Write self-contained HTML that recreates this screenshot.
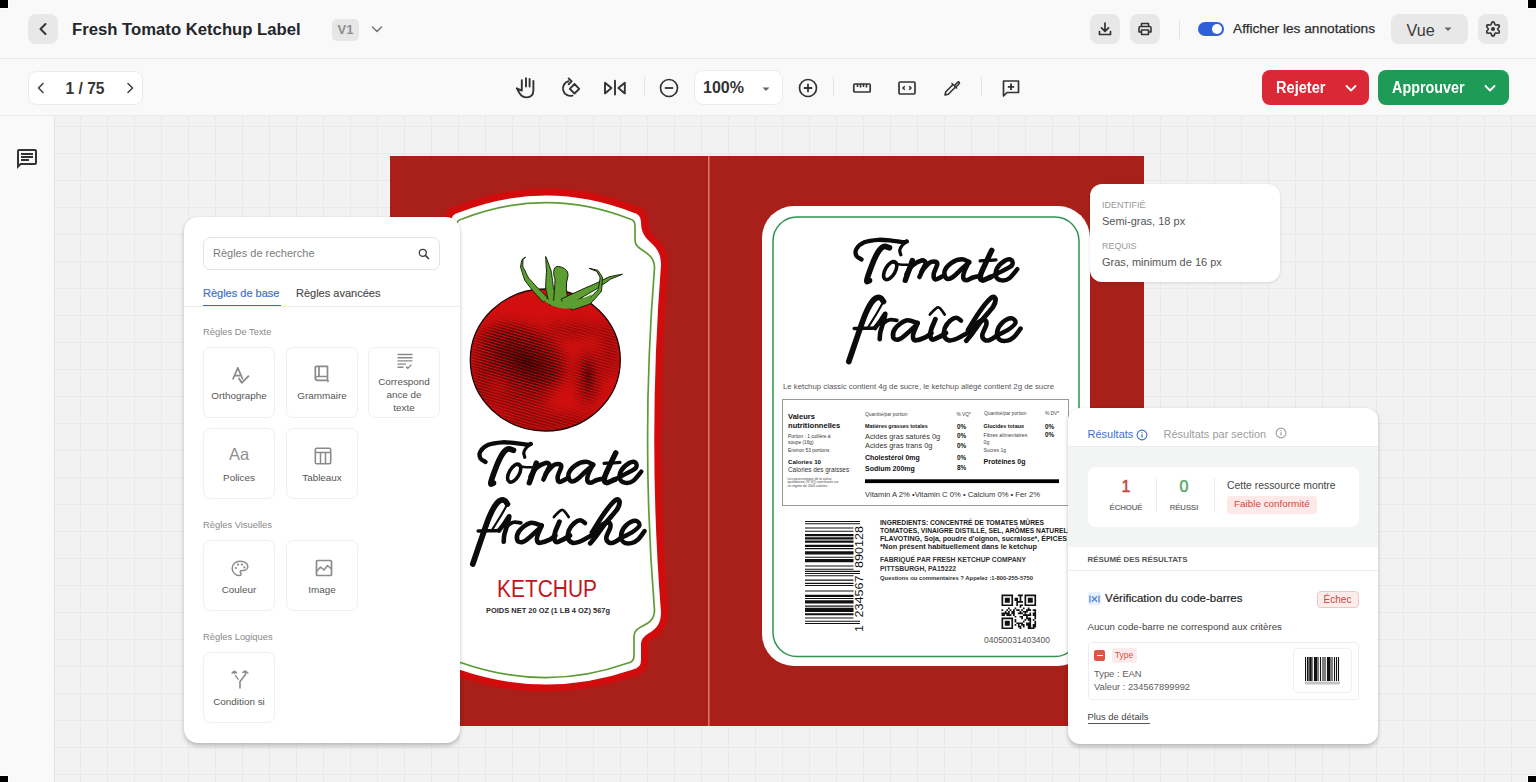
<!DOCTYPE html>
<html><head><meta charset="utf-8">
<style>
*{box-sizing:border-box;margin:0;padding:0}
html,body{width:1536px;height:782px;overflow:hidden;background:#f9f9f9;font-family:"Liberation Sans",sans-serif;color:#2b2b2b}
.abs{position:absolute}
.corner{position:absolute;width:9px;height:9px;background:#000;z-index:50}
#header{position:absolute;left:0;top:0;width:1536px;height:59px;background:#f9f9f9;border-bottom:1px solid #ebebeb}
#toolbar{position:absolute;left:0;top:58px;width:1536px;height:58px;background:transparent;border-bottom:1px solid #ececec}
#sidebar{position:absolute;left:0;top:116px;width:54px;height:666px;background:#f9f9f9}
#canvas{position:absolute;left:54px;top:116px;width:1482px;height:666px;background-color:#f2f2f2;
 background-image:linear-gradient(to right,#e9e9e9 1px,transparent 1px),linear-gradient(to bottom,#e9e9e9 1px,transparent 1px);
 background-size:27px 27px;background-position:-1px 10px}
.ibtn{position:absolute;width:30px;height:30px;border-radius:8px;background:#e8e8e9}
.ibtn svg{position:absolute;left:5px;top:5px}
.sep{position:absolute;width:1px;background:#e3e3e3}
svg{display:block}
#lpanel{position:absolute;left:184px;top:217px;width:276px;height:526px;background:#fff;border-radius:14px;box-shadow:0 2.5px 4px rgba(0,0,0,.22),0 0 1px rgba(0,0,0,.08);z-index:10}
.card{position:absolute;width:72px;height:71px;border:1px solid #f0f0f0;border-radius:7px;background:#fff}
.card .t{position:absolute;left:0;width:100%;text-align:center;font-size:9.9px;color:#555;line-height:13px}
.card svg{position:absolute}

#tip{position:absolute;left:1090px;top:184px;width:190px;height:98px;background:#fff;border-radius:12px;box-shadow:0 1px 3px rgba(0,0,0,.12);z-index:12}
#tip .k{position:absolute;left:12px;font-size:9px;color:#9a9a9a}
#tip .v{position:absolute;left:12px;font-size:11px;color:#555}
#rpanel{position:absolute;left:1068px;top:408px;width:310px;height:336px;background:#fff;border-radius:12px;box-shadow:0 2.5px 4px rgba(0,0,0,.22),0 0 1px rgba(0,0,0,.08);z-index:12;overflow:hidden}
.sect{position:absolute;left:19px;font-size:9.35px;color:#8a8a8a}

</style></head><body>
<div class="corner" style="left:0;top:0;border-right:1px solid #fff;border-bottom:1px solid #fff"></div>
<div class="corner" style="right:0;top:0;border-left:1px solid #fff;border-bottom:1px solid #fff"></div>
<div class="corner" style="left:0;bottom:-2px;border-right:1px solid #fff;border-top:1px solid #fff"></div>
<div class="corner" style="right:0;bottom:-2px;border-left:1px solid #fff;border-top:1px solid #fff"></div>

<div id="header">
  <div class="ibtn" style="left:28px;top:14px">
    <svg width="20" height="20" viewBox="0 0 20 20"><path d="M12.5 5 L7.5 10 L12.5 15" fill="none" stroke="#333" stroke-width="2" stroke-linecap="round" stroke-linejoin="round"/></svg>
  </div>
  <div class="abs" style="left:72px;top:20px;font-size:16.7px;font-weight:bold;color:#23262b;white-space:nowrap">Fresh Tomato Ketchup Label</div>
  <div class="abs" style="left:332px;top:18.5px;width:27px;height:22px;border-radius:5px;background:#e6e6e6;color:#8f8f8f;font-size:13px;font-weight:bold;text-align:center;line-height:22px">V1</div>
  <svg class="abs" style="left:368px;top:20px" width="18" height="18" viewBox="0 0 18 18"><path d="M4.5 7 L9 11.5 L13.5 7" fill="none" stroke="#777" stroke-width="1.6" stroke-linecap="round" stroke-linejoin="round"/></svg>

  <div class="ibtn" style="left:1090px;top:14px">
    <svg width="20" height="20" viewBox="0 0 20 20"><path d="M10 4 V12 M6.5 8.8 L10 12.3 L13.5 8.8 M4.5 12.5 V15.5 H15.5 V12.5" fill="none" stroke="#333" stroke-width="1.7" stroke-linecap="round" stroke-linejoin="round"/></svg>
  </div>
  <div class="ibtn" style="left:1130px;top:14px">
    <svg width="20" height="20" viewBox="0 0 20 20"><path d="M6.5 7.5 V4.5 H13.5 V7.5 M6.5 13 H4 V9 Q4 7.5 5.5 7.5 H14.5 Q16 7.5 16 9 V13 H13.5 M6.5 11 H13.5 V15.5 H6.5 Z" fill="none" stroke="#333" stroke-width="1.6" stroke-linejoin="round"/></svg>
  </div>
  <div class="sep" style="left:1179px;top:20px;height:19px"></div>
  <div class="abs" style="left:1198px;top:22px;width:26px;height:14px;border-radius:7px;background:#2f5fd9">
    <div class="abs" style="left:14px;top:2px;width:10px;height:10px;border-radius:50%;background:#fff"></div>
  </div>
  <div class="abs" style="left:1233px;top:20.5px;font-size:13.7px;color:#2e2e2e;white-space:nowrap;-webkit-text-stroke:0.25px #2e2e2e">Afficher les annotations</div>
  <div class="abs" style="left:1391px;top:14px;width:77px;height:30px;border-radius:8px;background:#e8e8e9">
    <div class="abs" style="left:15.5px;top:6.5px;font-size:16.2px;color:#3a3a3a">Vue</div>
    <svg class="abs" style="left:50px;top:8px" width="14" height="14" viewBox="0 0 14 14"><path d="M3.5 5.5 L7 9 L10.5 5.5Z" fill="#666"/></svg>
  </div>
  <div class="ibtn" style="left:1478px;top:14px">
    <svg width="20" height="20" viewBox="0 0 20 20"><path d="M10.00 2.85 L10.46 2.96 L10.89 3.27 L11.24 3.74 L11.53 4.30 L11.74 4.87 L11.92 5.37 L12.10 5.74 L12.32 5.97 L12.64 6.05 L13.05 6.02 L13.57 5.92 L14.17 5.83 L14.80 5.79 L15.38 5.87 L15.87 6.08 L16.19 6.42 L16.33 6.88 L16.27 7.40 L16.04 7.95 L15.70 8.47 L15.32 8.94 L14.97 9.35 L14.73 9.69 L14.65 10.00 L14.73 10.31 L14.97 10.65 L15.32 11.06 L15.70 11.53 L16.04 12.05 L16.27 12.60 L16.33 13.12 L16.19 13.57 L15.87 13.92 L15.38 14.13 L14.80 14.21 L14.17 14.17 L13.57 14.08 L13.05 13.98 L12.64 13.95 L12.32 14.03 L12.10 14.26 L11.92 14.63 L11.74 15.13 L11.53 15.70 L11.24 16.26 L10.89 16.73 L10.46 17.04 L10.00 17.15 L9.54 17.04 L9.11 16.73 L8.76 16.26 L8.47 15.70 L8.26 15.13 L8.08 14.63 L7.90 14.26 L7.68 14.03 L7.36 13.95 L6.95 13.98 L6.43 14.08 L5.83 14.17 L5.20 14.21 L4.62 14.13 L4.13 13.92 L3.81 13.58 L3.67 13.12 L3.73 12.60 L3.96 12.05 L4.30 11.53 L4.68 11.06 L5.03 10.65 L5.27 10.31 L5.35 10.00 L5.27 9.69 L5.03 9.35 L4.68 8.94 L4.30 8.47 L3.96 7.95 L3.73 7.40 L3.67 6.88 L3.81 6.42 L4.13 6.08 L4.62 5.87 L5.20 5.79 L5.83 5.83 L6.43 5.92 L6.95 6.02 L7.36 6.05 L7.67 5.97 L7.90 5.74 L8.08 5.37 L8.26 4.87 L8.47 4.30 L8.76 3.74 L9.11 3.27 L9.54 2.96Z" fill="none" stroke="#333" stroke-width="1.6" stroke-linejoin="round"/><circle cx="10" cy="10" r="2" fill="#333"/></svg>
  </div>
</div>

<div id="toolbar">
  <div class="abs" style="left:28px;top:13px;width:115px;height:34px;border-radius:8px;background:#fff;border:1px solid #ebebeb">
    <svg class="abs" style="left:3px;top:7px" width="18" height="18" viewBox="0 0 18 18"><path d="M11 4.5 L6.5 9 L11 13.5" fill="none" stroke="#444" stroke-width="1.6" stroke-linecap="round" stroke-linejoin="round"/></svg>
    <div class="abs" style="left:36.5px;top:8px;font-size:15.6px;font-weight:bold;color:#363636;white-space:nowrap">1 / 75</div>
    <svg class="abs" style="left:92px;top:7px" width="18" height="18" viewBox="0 0 18 18"><path d="M7 4.5 L11.5 9 L7 13.5" fill="none" stroke="#444" stroke-width="1.6" stroke-linecap="round" stroke-linejoin="round"/></svg>
  </div>

  <!-- tools -->
  <svg class="abs" style="left:510px;top:16px" width="120" height="28" viewBox="510 74 120 28"><g fill="none" stroke="#333" stroke-width="1.9" stroke-linecap="round" stroke-linejoin="round">
   <path d="M521.8 90 V80.2 M526 86.5 V78.2 M529.6 86.5 V79 M533.4 90.5 V81 M533.4 90 C533.4 95 530.5 97.4 526.5 97.4 C523 97.4 521 95.5 519.6 93.2 L516.8 88.3 L521.8 90.6"/>
   <path d="M572.5 95.6 A7.3 7.3 0 1 1 568.4 81.2 M568.6 78.4 L571.6 81.3 L568.6 84.2"/>
   <path d="M574.5 84 L579.2 88.8 L574.5 93.5 L569.8 88.8 Z"/>
   <path d="M605 82.8 V93.4 L611.4 88.1 Z M624.8 82.8 V93.4 L618.4 88.1 Z M615 80.8 V94.6"/>
  </g></svg>
  <div class="sep" style="left:644px;top:19px;height:19px"></div>
  <svg class="abs" style="left:659px;top:20px" width="20" height="20" viewBox="0 0 20 20"><circle cx="10" cy="10" r="8.5" fill="none" stroke="#333" stroke-width="1.7"/><path d="M5.8 10 H14.2" stroke="#333" stroke-width="1.8"/></svg>
  <div class="abs" style="left:694px;top:12px;width:89px;height:35px;border-radius:9px;background:#fff;border:1px solid #ececec">
    <div class="abs" style="left:8px;top:8px;font-size:16px;font-weight:bold;color:#333">100%</div>
    <svg class="abs" style="left:64px;top:11px" width="14" height="14" viewBox="0 0 14 14"><path d="M3.5 5.5 L7 9 L10.5 5.5Z" fill="#666"/></svg>
  </div>
  <svg class="abs" style="left:798px;top:20px" width="20" height="20" viewBox="0 0 20 20"><circle cx="10" cy="10" r="8.5" fill="none" stroke="#333" stroke-width="1.7"/><path d="M5.8 10 H14.2 M10 5.8 V14.2" stroke="#333" stroke-width="1.8"/></svg>
  <div class="sep" style="left:833px;top:19px;height:19px"></div>
  <svg class="abs" style="left:852px;top:20px" width="20" height="20" viewBox="0 0 20 20"><rect x="1.8" y="6" width="16.4" height="8" rx="1" fill="none" stroke="#333" stroke-width="1.7"/><path d="M5.5 6 V9 M8.5 6 V9.5 M11.5 6 V9 M14.5 6 V9.5" stroke="#333" stroke-width="1.6"/></svg>
  <svg class="abs" style="left:897px;top:20px" width="20" height="20" viewBox="0 0 20 20"><rect x="2" y="4" width="16" height="12" rx="1.2" fill="none" stroke="#333" stroke-width="1.7"/><path d="M7.8 8.2 L6 10 L7.8 11.8 M12.2 8.2 L14 10 L12.2 11.8" fill="none" stroke="#333" stroke-width="1.5"/></svg>
  <svg class="abs" style="left:942px;top:20px" width="20" height="20" viewBox="0 0 20 20"><path d="M11 6.5 L3.8 13.7 L3 17 L6.3 16.2 L13.5 9 M10 5.5 L14.5 10 M12.2 7.8 L15.2 4.8 Q16.5 3.5 17.2 4.2 Q18 5 16.7 6.3 L13.7 9.3" fill="none" stroke="#333" stroke-width="1.6" stroke-linecap="round" stroke-linejoin="round"/></svg>
  <div class="sep" style="left:981px;top:19px;height:19px"></div>
  <svg class="abs" style="left:1001px;top:20px" width="20" height="20" viewBox="0 0 20 20"><path d="M2.5 3 H17.5 V14.5 H6 L2.5 18 Z" fill="none" stroke="#333" stroke-width="1.7" stroke-linejoin="round"/><path d="M10 5.5 V12 M6.8 8.8 H13.2" stroke="#333" stroke-width="1.8"/></svg>
  <!-- action buttons -->
  <div class="abs" style="left:1262px;top:12px;width:107px;height:35px;border-radius:8px;background:#da2836">
    <div class="abs" style="left:14px;top:8.8px;font-size:15.8px;font-weight:bold;color:#fff;transform:scaleX(.925);transform-origin:0 0">Rejeter</div>
    <svg class="abs" style="left:81px;top:10px" width="16" height="16" viewBox="0 0 16 16"><path d="M3.5 6 L8 10.5 L12.5 6" fill="none" stroke="#fff" stroke-width="1.8" stroke-linecap="round" stroke-linejoin="round"/></svg>
  </div>
  <div class="abs" style="left:1378px;top:12px;width:131px;height:35px;border-radius:8px;background:#1f9b58">
    <div class="abs" style="left:14px;top:8.8px;font-size:15.8px;font-weight:bold;color:#fff;transform:scaleX(.91);transform-origin:0 0">Approuver</div>
    <svg class="abs" style="left:104px;top:10px" width="16" height="16" viewBox="0 0 16 16"><path d="M3.5 6 L8 10.5 L12.5 6" fill="none" stroke="#fff" stroke-width="1.8" stroke-linecap="round" stroke-linejoin="round"/></svg>
  </div>
</div>

<div id="sidebar">
  <svg class="abs" style="left:15px;top:31px" width="24" height="24" viewBox="0 0 24 24"><path fill="#333" d="M4 4h16v12H5.17L4 17.17V4m0-2c-1.1 0-1.99.9-1.99 2L2 22l4-4h14c1.1 0 2-.9 2-2V4c0-1.1-.9-2-2-2H4zm2 10h8v2H6v-2zm0-3h12v2H6V9zm0-3h12v2H6V6z" transform="translate(0,0)"/></svg>
</div>
<div id="canvas"></div>
<div class="abs" style="left:54px;top:116px;width:1px;height:666px;background:#e4e4e4"></div>






<div id="tip">
  <div class="k" style="top:16px">IDENTIFIÉ</div>
  <div class="v" style="top:31px">Semi-gras, 18 px</div>
  <div class="k" style="top:57px">REQUIS</div>
  <div class="v" style="top:72px">Gras, minimum de 16 px</div>
</div>
<div id="rpanel">
  <div class="abs" style="left:19.5px;top:20px;font-size:11px;color:#3c6fd0;white-space:nowrap">Résultats</div>
  <svg class="abs" style="left:68px;top:20.5px" width="12" height="12" viewBox="0 0 12 12"><circle cx="6" cy="6" r="4.9" fill="none" stroke="#3c6fd0" stroke-width="1.1"/><path d="M6 5.2 V8.6" stroke="#3c6fd0" stroke-width="1.2"/><circle cx="6" cy="3.6" r="0.7" fill="#3c6fd0"/></svg>
  <div class="abs" style="left:95.5px;top:20px;font-size:11px;color:#9d9d9d;white-space:nowrap">Résultats par section</div>
  <svg class="abs" style="left:206.5px;top:19px" width="12" height="12" viewBox="0 0 12 12"><circle cx="6" cy="6" r="4.9" fill="none" stroke="#9d9d9d" stroke-width="1.1"/><path d="M6 5.2 V8.6" stroke="#9d9d9d" stroke-width="1.2"/><circle cx="6" cy="3.6" r="0.7" fill="#9d9d9d"/></svg>
  <div class="abs" style="left:0;top:38px;width:310px;height:101px;background:#f3f4f4;border-top:1px solid #ececec"></div>
  <div class="abs" style="left:19.5px;top:58.5px;width:271px;height:60px;background:#fff;border-radius:8px"></div>
  <div class="abs" style="left:38px;top:69.5px;width:40px;text-align:center;font-size:16px;color:#c4463c;-webkit-text-stroke:0.5px #c4463c">1</div>
  <div class="abs" style="left:33px;top:94.5px;width:50px;text-align:center;font-size:7.7px;color:#666;-webkit-text-stroke:0.2px #666">ÉCHOUÉ</div>
  <div class="abs" style="left:88px;top:70px;width:1px;height:34px;background:#ececec"></div>
  <div class="abs" style="left:96px;top:69.5px;width:40px;text-align:center;font-size:16px;color:#55a76c;-webkit-text-stroke:0.5px #55a76c">0</div>
  <div class="abs" style="left:91px;top:94.5px;width:50px;text-align:center;font-size:7.7px;color:#666;-webkit-text-stroke:0.2px #666">RÉUSSI</div>
  <div class="abs" style="left:146px;top:70px;width:1px;height:34px;background:#ececec"></div>
  <div class="abs" style="left:159px;top:71.5px;font-size:10.4px;color:#444;white-space:nowrap">Cette ressource montre</div>
  <div class="abs" style="left:159px;top:87.5px;width:90px;height:18px;background:#fde9e9;border-radius:3px"></div>
  <div class="abs" style="left:166px;top:90px;font-size:9.9px;color:#d8453b;white-space:nowrap">Faible conformité</div>
  <div class="abs" style="left:19.5px;top:146.5px;font-size:7.9px;font-weight:bold;color:#555;white-space:nowrap">RÉSUMÉ DES RÉSULTATS</div>
  <div class="abs" style="left:0;top:162px;width:310px;height:1px;background:#ececec"></div>
  <div class="abs" style="left:19.5px;top:184px;width:13px;height:13px;border-radius:2px;background:#e6effd"></div>
  <svg class="abs" style="left:20.5px;top:185.5px" width="11" height="10" viewBox="0 0 11 10"><path d="M1 1.5 V8.5 M10 1.5 V8.5" stroke="#4a7bd8" stroke-width="1.2"/><path d="M3 2.5 L5.5 5 L8 2.5 M3 7.5 L5.5 5 L8 7.5" fill="none" stroke="#4a7bd8" stroke-width="1.2"/></svg>
  <div class="abs" style="left:37px;top:184px;font-size:11.5px;color:#252525;white-space:nowrap;-webkit-text-stroke:0.2px #252525">Vérification du code-barres</div>
  <div class="abs" style="left:248.5px;top:183px;width:42px;height:17px;background:#fdecec;border:1px solid #f3c4c4;border-radius:4px;text-align:center;font-size:10px;line-height:15px;color:#c9463c">Échec</div>
  <div class="abs" style="left:19.5px;top:213px;font-size:9.7px;color:#444;white-space:nowrap">Aucun code-barre ne correspond aux critères</div>
  <div class="abs" style="left:19.5px;top:233.5px;width:271px;height:58.5px;border:1px solid #ededed;border-radius:4px"></div>
  <div class="abs" style="left:26px;top:242px;width:11px;height:11px;border-radius:2px;background:#e05448"></div>
  <div class="abs" style="left:28.5px;top:246.8px;width:6px;height:1.6px;background:#fff"></div>
  <div class="abs" style="left:43.5px;top:240px;width:25px;height:15px;border-radius:3px;background:#fdeaea;font-size:8.5px;line-height:15px;text-align:center;color:#d0544a">Type</div>
  <div class="abs" style="left:26px;top:259.5px;font-size:9.4px;color:#606060;white-space:nowrap">Type : EAN</div>
  <div class="abs" style="left:26px;top:273.5px;font-size:9.3px;color:#606060;white-space:nowrap">Valeur : 234567899992</div>
  <div class="abs" style="left:225px;top:240px;width:59px;height:45px;border:1px solid #f0f0f0;border-radius:4px;background:#fff"></div>
  <svg class="abs" style="left:237px;top:249px" width="35" height="28" viewBox="0 0 35 28"><path d="M0.5 0 V24 M2.5 0 V24 M4 0 V24 M7 0 V24 M9.5 0 V24 M13 0 V24 M15.5 0 V24 M18 0 V24 M20 0 V24 M22.5 0 V24 M25 0 V24 M27 0 V24 M29.5 0 V24 M31.5 0 V24 M33.5 0 V24" stroke="#111" stroke-width="1.1"/><path d="M5.5 0 V24 M11 0 V24 M24 0 V24" stroke="#111" stroke-width="2"/><rect x="0" y="24.5" width="35" height="3" fill="#888" opacity="0.5"/></svg>
  <div class="abs" style="left:19.5px;top:303px;font-size:9.4px;color:#444;white-space:nowrap">Plus de détails</div>
  <div class="abs" style="left:19.5px;top:315px;width:62px;height:1px;background:#555"></div>
</div>













<svg id="label" class="abs" style="left:390px;top:156px;z-index:1" width="754" height="570" viewBox="390 156 754 570">
<defs>
  <pattern id="hatch" width="6" height="2.8" patternUnits="userSpaceOnUse" patternTransform="rotate(16)">
    <rect width="6" height="1.4" fill="#220202"/>
  </pattern>
  <radialGradient id="mk" cx="0.5" cy="0.5" r="0.5">
    <stop offset="0" stop-color="#fff" stop-opacity="1"/>
    <stop offset="1" stop-color="#fff" stop-opacity="0"/>
  </radialGradient>
  <filter id="blur6" x="-50%" y="-50%" width="200%" height="200%"><feGaussianBlur stdDeviation="7"/></filter>
  <mask id="shmask" maskUnits="userSpaceOnUse" x="460" y="280" width="170" height="160">
    <g filter="url(#blur6)">
    <ellipse cx="522" cy="358" rx="46" ry="30" fill="#fff" transform="rotate(25 522 358)"/>
    <ellipse cx="588" cy="378" rx="9" ry="26" fill="#fff"/>
    <ellipse cx="575" cy="330" rx="30" ry="5" fill="#ccc"/>
    <ellipse cx="482" cy="372" rx="9" ry="40" fill="#bbb"/>
    <ellipse cx="545" cy="422" rx="50" ry="8" fill="#aaa"/>
    <ellipse cx="610" cy="350" rx="7" ry="28" fill="#aaa"/>
    <ellipse cx="520" cy="400" rx="30" ry="12" fill="#999"/>
    </g>
  </mask>
  <radialGradient id="dark1" cx="0.5" cy="0.5" r="0.5">
    <stop offset="0" stop-color="#2a0202" stop-opacity="0.85"/>
    <stop offset="0.6" stop-color="#4a0404" stop-opacity="0.45"/>
    <stop offset="1" stop-color="#4a0404" stop-opacity="0"/>
  </radialGradient>
  <clipPath id="tclip"><ellipse cx="545.3" cy="360" rx="75" ry="71"/></clipPath>
</defs>
<rect x="390" y="156" width="754" height="570" fill="#a91f19"/>
<rect x="708" y="156" width="1.6" height="570" fill="#d8726c"/>
<!-- left bottle label -->
<path d="M451 222 Q451 214 459 212.5 Q546 178.5 633 212.5 Q641 214 641 222 C641 245 661 240 661 265 C652 380 652 500 661 612 C661 636 641 630 641 645 L641 660 Q641 668 633 669.5 Q546 699.5 459 669.5 Q451 668 451 660 L451 645 C451 630 431 636 431 612 C440 500 440 380 431 265 C431 240 451 245 451 222 Z" fill="#d20c0c" stroke="#d20c0c" stroke-width="14" stroke-linejoin="round"/>
<path d="M451 222 Q451 214 459 212.5 Q546 178.5 633 212.5 Q641 214 641 222 C641 245 661 240 661 265 C652 380 652 500 661 612 C661 636 641 630 641 645 L641 660 Q641 668 633 669.5 Q546 699.5 459 669.5 Q451 668 451 660 L451 645 C451 630 431 636 431 612 C440 500 440 380 431 265 C431 240 451 245 451 222 Z" fill="#fff"/>
<path d="M456.5 226 Q456.5 220 462 219 Q546 186.2 630 219 Q635 220 635 226 L635 240 C635 252 654.5 250 654.5 268 C645.5 380 645.5 500 654.5 610 C654.5 628 634 624 634 636 L634 656 Q634 662 628 663 Q546 692.2 462 663 Q456.5 662 456.5 656 L456.5 636 C456.5 624 437.5 628 437.5 610 C446.5 500 446.5 380 437.5 268 C437.5 250 456.5 252 456.5 240 Z" fill="none" stroke="#5d9c35" stroke-width="1.7"/>
<!-- tomato -->
<g>
  <ellipse cx="545.3" cy="360" rx="75" ry="71" fill="#d10f0f"/>
  <g clip-path="url(#tclip)">
    <g mask="url(#shmask)"><rect x="465" y="285" width="160" height="150" fill="url(#hatch)"/></g>
    <ellipse cx="526" cy="362" rx="38" ry="20" fill="url(#dark1)" transform="rotate(28 526 362)" opacity="0.8"/>
    <ellipse cx="588" cy="376" rx="8" ry="18" fill="url(#dark1)" opacity="0.5"/>
  </g>
  <ellipse cx="545.3" cy="360" rx="75" ry="71" fill="none" stroke="#1e0404" stroke-width="1.3"/>
  <g fill="#5c9e31" stroke="#142008" stroke-width="1" stroke-linejoin="round"><path d="M547.7 297.9 L546.5 296.6 L545.2 295.4 L544.0 294.1 L542.8 292.9 L541.5 291.6 L540.3 290.4 L539.0 289.2 L537.8 288.0 L536.6 286.8 L535.5 285.5 L534.3 284.2 L533.1 282.9 L531.9 281.6 L530.7 280.3 L529.5 279.1 L528.5 278.0 L527.9 276.8 L527.1 275.2 L526.3 273.6 L525.6 272.0 L524.8 270.4 L524.0 268.9 L523.2 267.4 L522.8 266.0 L522.8 264.5 L522.9 262.7 L522.9 261.0 L523.1 259.5 L524.3 258.3 L525.5 257.0 L525.5 257.0 L524.0 258.0 L522.5 259.0 L521.7 260.7 L521.3 262.5 L521.0 264.2 L520.6 266.1 L520.9 268.1 L521.4 269.9 L521.9 271.6 L522.5 273.3 L523.0 274.9 L523.5 276.6 L524.1 278.3 L524.8 280.3 L526.1 282.0 L527.1 283.4 L528.2 284.8 L529.2 286.2 L530.3 287.6 L531.4 288.9 L532.5 290.4 L533.7 291.8 L534.9 293.1 L536.1 294.4 L537.3 295.7 L538.5 297.0 L539.7 298.3 L540.9 299.6 L542.1 300.8 L543.3 302.1Z"/><path d="M558.2 302.8 L557.8 301.2 L557.4 299.7 L556.9 298.1 L556.4 296.6 L556.0 295.1 L555.5 293.5 L555.0 292.0 L554.4 290.5 L553.9 288.9 L553.5 287.7 L553.3 286.6 L553.1 285.1 L552.9 283.5 L552.7 281.9 L552.5 280.3 L552.3 278.7 L552.0 277.0 L551.8 275.4 L551.6 273.8 L551.3 272.2 L551.0 270.4 L550.4 268.7 L549.8 267.2 L549.3 265.6 L548.7 264.1 L548.1 262.6 L547.6 261.1 L547.0 259.5 L546.4 258.0 L545.7 256.5 L545.7 256.5 L545.7 258.1 L545.8 259.8 L545.9 261.4 L546.0 263.1 L546.1 264.7 L546.2 266.3 L546.3 267.9 L546.4 269.6 L546.5 271.0 L546.4 272.5 L546.3 274.0 L546.2 275.7 L546.1 277.3 L546.0 278.9 L545.9 280.5 L545.8 282.2 L545.7 283.8 L545.7 285.4 L545.7 287.1 L545.8 289.2 L546.2 291.1 L546.6 292.7 L546.9 294.2 L547.3 295.8 L547.7 297.4 L548.1 299.0 L548.5 300.5 L548.9 302.1 L549.3 303.6 L549.8 305.2Z"/><path d="M553.5 303 C554 294 555 286 555 279 C553 275 553 267 557 266.5 C561 266 566 269 567.5 272 C569 275 567 279 566.5 283 C566 290 567 297 569 303 Z"/><path d="M564.9 306.8 L566.9 305.8 L568.8 304.7 L570.8 303.7 L572.7 302.6 L574.7 301.5 L576.6 300.5 L578.5 299.4 L580.5 298.3 L582.4 297.2 L584.3 296.1 L586.2 295.0 L588.1 293.9 L590.0 292.7 L592.0 291.6 L593.9 290.5 L595.8 289.4 L597.7 288.2 L599.6 286.9 L601.5 285.6 L603.3 284.3 L605.1 283.1 L606.9 281.8 L608.7 280.5 L610.3 279.2 L612.2 278.5 L614.3 277.6 L616.4 276.8 L618.4 275.9 L620.5 275.1 L622.5 274.2 L622.5 274.2 L620.3 274.6 L618.1 275.0 L615.9 275.4 L613.8 275.8 L611.6 276.3 L609.2 276.8 L607.1 277.8 L605.1 278.8 L603.1 279.8 L601.1 280.8 L599.1 281.8 L597.2 282.7 L595.3 283.6 L593.3 284.5 L591.2 285.4 L589.2 286.3 L587.2 287.1 L585.2 288.0 L583.1 288.9 L581.1 289.9 L579.1 290.8 L577.1 291.7 L575.1 292.6 L573.1 293.5 L571.1 294.4 L569.0 295.4 L567.0 296.3 L565.0 297.3 L563.1 298.2 L561.1 299.2Z"/><path d="M571.7 310.1 L573.8 309.5 L575.8 308.8 L577.8 308.2 L579.9 307.5 L581.9 306.8 L583.9 306.1 L586.0 305.4 L588.1 304.7 L590.5 303.6 L592.3 301.7 L593.7 300.1 L595.2 298.5 L596.6 296.9 L598.0 295.3 L599.4 293.6 L601.1 291.7 L601.7 289.1 L601.9 286.8 L602.0 284.7 L602.2 282.6 L602.3 280.4 L602.5 278.0 L601.6 275.7 L600.3 273.9 L599.1 272.1 L597.6 270.2 L595.3 269.7 L593.2 269.2 L591.1 268.7 L589.0 268.3 L589.0 268.3 L591.0 269.1 L593.0 269.9 L595.0 270.7 L596.8 271.3 L597.7 273.0 L598.7 274.9 L599.7 276.7 L600.1 278.2 L599.8 280.1 L599.4 282.2 L599.0 284.3 L598.7 286.5 L598.3 288.5 L597.9 289.9 L596.7 291.1 L595.2 292.6 L593.6 294.1 L592.1 295.6 L590.6 297.2 L589.1 298.7 L588.0 299.9 L586.5 300.5 L584.5 301.1 L582.5 301.8 L580.5 302.4 L578.4 303.1 L576.4 303.8 L574.3 304.4 L572.3 305.1 L570.3 305.9Z"/><path d="M541 297 C548 300 556 302 565 301.5 C575 301 585 298 592 294 C590 301 582 307 570 308.5 C558 309.5 547 305 541 297 Z" stroke="none"/></g>
</g>
<!-- left script -->
<g transform="translate(-376 202.5)"><g fill="none" stroke="#0b0b0b" stroke-linecap="round" stroke-linejoin="round"><path d="M861.5 259.4C860.7 258.8 857.4 257.7 856.5 256.0C855.6 254.3 855.1 251.3 856.4 249.0C857.7 246.7 860.6 243.8 864.3 242.3C868.0 240.8 873.8 240.1 878.6 239.8C883.4 239.6 888.6 240.4 892.9 240.8C897.2 241.2 902.1 242.1 904.4 242.2C906.7 242.3 906.4 241.5 906.8 241.4" stroke-width="4.32"/><path d="M906.8 241.4C906.1 242.0 903.7 243.6 902.5 245.0C901.3 246.4 900.1 248.4 899.8 250.0C899.5 251.6 900.6 254.0 900.8 254.8" stroke-width="3.24"/><path d="M889.5 247.8C888.5 247.6 885.5 245.8 883.5 246.6C881.5 247.4 879.8 249.2 877.8 252.5C875.8 255.8 873.3 261.5 871.5 266.2C869.7 270.9 867.1 278.1 866.8 280.5C866.5 282.9 869.0 280.5 869.5 280.5" stroke-width="5.67"/><path d="M893.5 262.5C894.6 262.8 897.7 264.1 900.0 264.5C902.3 264.9 906.2 264.8 907.5 264.8" stroke-width="2.43"/><path d="M912.3 260.5C911.8 262.1 910.2 266.7 909.0 270.0C907.8 273.3 905.9 278.6 905.3 280.3" stroke-width="5.40"/><path d="M906.5 274.0C907.5 272.6 909.8 267.8 912.3 265.5C914.8 263.2 919.4 261.0 921.6 260.5C923.8 260.0 925.3 261.4 925.6 262.6C925.9 263.9 924.5 265.6 923.5 268.0C922.5 270.4 920.1 275.5 919.4 277.0" stroke-width="4.59"/><path d="M921.6 271.2C922.8 269.9 926.6 264.9 928.7 263.3C930.9 261.7 933.1 261.5 934.5 261.6C935.9 261.7 937.4 262.0 937.3 264.1C937.2 266.2 934.0 271.5 933.7 274.1C933.4 276.7 934.0 279.2 935.5 279.5C937.0 279.8 941.8 276.6 943.0 276.0" stroke-width="4.59"/><path d="M969.4 262.4C968.2 261.9 965.2 259.2 962.2 259.3C959.2 259.4 954.4 260.8 951.5 262.8C948.6 264.8 945.4 268.6 944.6 271.2C943.8 273.8 945.1 277.4 946.5 278.4C947.9 279.4 950.3 278.7 952.9 277.0C955.5 275.3 959.6 270.8 962.2 268.4C964.8 266.0 967.6 263.6 968.7 262.6" stroke-width="4.59"/><path d="M968.9 261.8C968.2 263.3 965.5 268.4 964.5 271.0C963.5 273.6 962.9 276.0 963.2 277.5C963.5 279.0 964.9 280.2 966.5 280.2C968.1 280.2 970.6 278.2 973.0 277.5C975.4 276.8 979.7 276.2 981.0 276.0" stroke-width="4.59"/><path d="M991.8 250.3C990.9 252.1 988.5 257.0 986.6 261.2C984.7 265.4 981.1 272.3 980.4 275.5C979.7 278.7 980.8 279.9 982.5 280.2C984.2 280.4 989.4 277.5 990.8 277.0" stroke-width="5.40"/><path d="M980.1 260.8C981.4 260.7 985.4 260.5 988.0 260.3C990.6 260.1 994.7 260.0 996.0 259.9" stroke-width="3.24"/><path d="M990.8 277.0C992.6 276.1 998.1 273.3 1001.6 271.4C1005.1 269.5 1010.2 267.4 1011.8 265.5C1013.4 263.6 1012.5 260.8 1011.4 260.0C1010.3 259.2 1007.6 259.1 1005.2 260.5C1002.8 261.9 998.5 265.6 997.0 268.4C995.5 271.1 995.4 275.0 996.2 277.0C997.0 279.0 999.7 280.1 1001.8 280.4C1003.9 280.6 1006.4 280.4 1009.0 278.5C1011.6 276.6 1015.9 270.7 1017.3 269.1" stroke-width="4.46"/><path d="M883.5 301.5C882.9 300.8 881.4 297.7 879.7 297.5C878.0 297.3 875.5 297.8 873.1 300.5C870.7 303.2 868.0 308.1 865.5 313.8C863.0 319.5 860.8 326.7 858.0 334.6C855.2 342.6 850.3 357.0 848.8 361.5" stroke-width="5.67"/><path d="M883.5 301.5C882.4 303.4 879.6 308.7 877.0 313.0C874.4 317.3 869.5 325.1 868.0 327.5" stroke-width="2.16"/><path d="M854.2 328.6C855.8 328.6 860.5 328.4 864.0 328.3C867.5 328.2 873.2 328.1 875.0 328.0" stroke-width="3.51"/><path d="M875.0 328.0C876.0 326.7 879.3 322.4 881.0 320.0C882.7 317.6 885.1 313.1 885.4 313.8C885.7 314.6 883.5 321.4 882.6 324.5C881.8 327.6 880.8 330.0 880.3 332.5C879.8 335.0 879.8 338.2 879.7 339.3" stroke-width="4.59"/><path d="M881.6 325.1C882.4 324.4 884.9 321.9 886.5 321.0C888.1 320.1 889.4 319.7 891.1 319.6C892.8 319.5 895.8 320.3 896.8 320.4" stroke-width="3.78"/><path d="M917.6 323.2C915.7 322.7 909.9 319.5 906.2 320.4C902.5 321.3 897.4 325.6 895.2 328.5C893.0 331.4 892.7 335.6 893.2 337.5C893.8 339.4 896.4 340.1 898.5 339.6C900.6 339.1 903.1 336.8 906.0 334.5C908.9 332.2 914.1 327.1 915.7 325.6" stroke-width="4.59"/><path d="M917.8 322.8C917.1 324.5 914.3 330.4 913.5 333.0C912.7 335.6 912.7 337.3 913.2 338.5C913.7 339.7 914.5 340.5 916.5 340.3C918.5 340.1 922.7 338.6 925.2 337.4C927.7 336.2 930.5 333.7 931.5 333.0" stroke-width="4.59"/><path d="M935.4 319.2C934.8 320.8 932.4 325.8 931.5 328.5C930.6 331.2 930.0 333.6 930.3 335.5C930.5 337.4 931.4 339.4 933.0 339.6C934.6 339.8 937.9 337.6 940.1 336.5C942.3 335.4 945.0 333.6 946.0 333.0" stroke-width="4.86"/><path d="M929.9 314.5C931.3 313.3 935.7 307.3 938.2 307.3C940.7 307.3 943.6 313.3 944.7 314.5" stroke-width="2.70"/><path d="M961.0 320.6C960.2 320.1 958.3 317.8 956.5 317.8C954.7 317.8 952.4 318.8 950.4 320.5C948.4 322.2 945.8 325.4 944.8 328.0C943.8 330.6 943.6 334.0 944.2 336.0C944.8 338.0 946.7 339.6 948.5 340.2C950.3 340.8 952.6 340.2 955.0 339.4C957.4 338.6 960.3 336.8 962.8 335.5C965.3 334.2 968.8 332.2 970.0 331.5" stroke-width="4.59"/><path d="M968.0 330.0C969.7 327.3 974.8 318.7 978.0 314.0C981.2 309.3 984.5 304.8 987.0 302.0C989.5 299.2 991.4 297.4 992.8 297.0C994.2 296.6 995.6 297.8 995.6 299.5C995.6 301.2 995.3 303.6 993.0 307.0C990.7 310.4 985.4 315.7 982.0 320.0C978.6 324.3 975.1 329.5 972.5 333.0C969.9 336.5 967.3 339.5 966.3 340.8" stroke-width="4.86"/><path d="M970.4 331.7C971.7 330.1 975.6 324.3 978.0 322.4C980.4 320.5 983.4 319.9 984.8 320.3C986.2 320.7 986.8 322.1 986.4 324.5C986.0 326.9 982.6 332.4 982.3 335.0C982.0 337.6 983.5 339.2 984.8 340.0C986.1 340.8 988.0 340.6 990.0 339.8C992.0 339.1 995.8 336.2 996.9 335.5" stroke-width="4.59"/><path d="M996.9 335.5C998.8 334.5 1005.4 331.6 1008.5 329.5C1011.6 327.4 1015.0 324.7 1015.5 322.8C1016.0 320.9 1013.7 318.4 1011.5 318.3C1009.3 318.2 1004.9 320.3 1002.5 322.5C1000.1 324.7 997.7 328.6 997.2 331.5C996.7 334.4 997.8 338.1 999.5 339.6C1001.2 341.1 1005.1 341.0 1007.5 340.6C1009.9 340.2 1011.8 339.0 1014.0 337.0C1016.2 335.0 1019.5 329.9 1020.6 328.5" stroke-width="4.46"/><ellipse cx="890.2" cy="270.6" rx="10" ry="5" transform="rotate(-60 890.2 270.6)" stroke-width="3.6"/></g></g>
<text x="497" y="597.3" font-family="Liberation Sans" font-size="24.5" textLength="100" lengthAdjust="spacingAndGlyphs" fill="#bf161d">KETCHUP</text>
<text x="486" y="613" font-family="Liberation Sans" font-weight="bold" font-size="7.4" textLength="124" lengthAdjust="spacingAndGlyphs" fill="#2a2a2a">POIDS NET 20 OZ (1 LB 4 OZ) 567g</text>

<!-- right label card -->
<rect x="762" y="206" width="328" height="460" rx="32" fill="#fff"/>
<rect x="773" y="217" width="306" height="439.5" rx="24" fill="none" stroke="#2f9450" stroke-width="1.5"/>
<g id="scr" fill="none" stroke="#0b0b0b" stroke-linecap="round" stroke-linejoin="round"><path d="M861.5 259.4C860.7 258.8 857.4 257.7 856.5 256.0C855.6 254.3 855.1 251.3 856.4 249.0C857.7 246.7 860.6 243.8 864.3 242.3C868.0 240.8 873.8 240.1 878.6 239.8C883.4 239.6 888.6 240.4 892.9 240.8C897.2 241.2 902.1 242.1 904.4 242.2C906.7 242.3 906.4 241.5 906.8 241.4" stroke-width="4.32"/><path d="M906.8 241.4C906.1 242.0 903.7 243.6 902.5 245.0C901.3 246.4 900.1 248.4 899.8 250.0C899.5 251.6 900.6 254.0 900.8 254.8" stroke-width="3.24"/><path d="M889.5 247.8C888.5 247.6 885.5 245.8 883.5 246.6C881.5 247.4 879.8 249.2 877.8 252.5C875.8 255.8 873.3 261.5 871.5 266.2C869.7 270.9 867.1 278.1 866.8 280.5C866.5 282.9 869.0 280.5 869.5 280.5" stroke-width="5.67"/><path d="M893.5 262.5C894.6 262.8 897.7 264.1 900.0 264.5C902.3 264.9 906.2 264.8 907.5 264.8" stroke-width="2.43"/><path d="M912.3 260.5C911.8 262.1 910.2 266.7 909.0 270.0C907.8 273.3 905.9 278.6 905.3 280.3" stroke-width="5.40"/><path d="M906.5 274.0C907.5 272.6 909.8 267.8 912.3 265.5C914.8 263.2 919.4 261.0 921.6 260.5C923.8 260.0 925.3 261.4 925.6 262.6C925.9 263.9 924.5 265.6 923.5 268.0C922.5 270.4 920.1 275.5 919.4 277.0" stroke-width="4.59"/><path d="M921.6 271.2C922.8 269.9 926.6 264.9 928.7 263.3C930.9 261.7 933.1 261.5 934.5 261.6C935.9 261.7 937.4 262.0 937.3 264.1C937.2 266.2 934.0 271.5 933.7 274.1C933.4 276.7 934.0 279.2 935.5 279.5C937.0 279.8 941.8 276.6 943.0 276.0" stroke-width="4.59"/><path d="M969.4 262.4C968.2 261.9 965.2 259.2 962.2 259.3C959.2 259.4 954.4 260.8 951.5 262.8C948.6 264.8 945.4 268.6 944.6 271.2C943.8 273.8 945.1 277.4 946.5 278.4C947.9 279.4 950.3 278.7 952.9 277.0C955.5 275.3 959.6 270.8 962.2 268.4C964.8 266.0 967.6 263.6 968.7 262.6" stroke-width="4.59"/><path d="M968.9 261.8C968.2 263.3 965.5 268.4 964.5 271.0C963.5 273.6 962.9 276.0 963.2 277.5C963.5 279.0 964.9 280.2 966.5 280.2C968.1 280.2 970.6 278.2 973.0 277.5C975.4 276.8 979.7 276.2 981.0 276.0" stroke-width="4.59"/><path d="M991.8 250.3C990.9 252.1 988.5 257.0 986.6 261.2C984.7 265.4 981.1 272.3 980.4 275.5C979.7 278.7 980.8 279.9 982.5 280.2C984.2 280.4 989.4 277.5 990.8 277.0" stroke-width="5.40"/><path d="M980.1 260.8C981.4 260.7 985.4 260.5 988.0 260.3C990.6 260.1 994.7 260.0 996.0 259.9" stroke-width="3.24"/><path d="M990.8 277.0C992.6 276.1 998.1 273.3 1001.6 271.4C1005.1 269.5 1010.2 267.4 1011.8 265.5C1013.4 263.6 1012.5 260.8 1011.4 260.0C1010.3 259.2 1007.6 259.1 1005.2 260.5C1002.8 261.9 998.5 265.6 997.0 268.4C995.5 271.1 995.4 275.0 996.2 277.0C997.0 279.0 999.7 280.1 1001.8 280.4C1003.9 280.6 1006.4 280.4 1009.0 278.5C1011.6 276.6 1015.9 270.7 1017.3 269.1" stroke-width="4.46"/><path d="M883.5 301.5C882.9 300.8 881.4 297.7 879.7 297.5C878.0 297.3 875.5 297.8 873.1 300.5C870.7 303.2 868.0 308.1 865.5 313.8C863.0 319.5 860.8 326.7 858.0 334.6C855.2 342.6 850.3 357.0 848.8 361.5" stroke-width="5.67"/><path d="M883.5 301.5C882.4 303.4 879.6 308.7 877.0 313.0C874.4 317.3 869.5 325.1 868.0 327.5" stroke-width="2.16"/><path d="M854.2 328.6C855.8 328.6 860.5 328.4 864.0 328.3C867.5 328.2 873.2 328.1 875.0 328.0" stroke-width="3.51"/><path d="M875.0 328.0C876.0 326.7 879.3 322.4 881.0 320.0C882.7 317.6 885.1 313.1 885.4 313.8C885.7 314.6 883.5 321.4 882.6 324.5C881.8 327.6 880.8 330.0 880.3 332.5C879.8 335.0 879.8 338.2 879.7 339.3" stroke-width="4.59"/><path d="M881.6 325.1C882.4 324.4 884.9 321.9 886.5 321.0C888.1 320.1 889.4 319.7 891.1 319.6C892.8 319.5 895.8 320.3 896.8 320.4" stroke-width="3.78"/><path d="M917.6 323.2C915.7 322.7 909.9 319.5 906.2 320.4C902.5 321.3 897.4 325.6 895.2 328.5C893.0 331.4 892.7 335.6 893.2 337.5C893.8 339.4 896.4 340.1 898.5 339.6C900.6 339.1 903.1 336.8 906.0 334.5C908.9 332.2 914.1 327.1 915.7 325.6" stroke-width="4.59"/><path d="M917.8 322.8C917.1 324.5 914.3 330.4 913.5 333.0C912.7 335.6 912.7 337.3 913.2 338.5C913.7 339.7 914.5 340.5 916.5 340.3C918.5 340.1 922.7 338.6 925.2 337.4C927.7 336.2 930.5 333.7 931.5 333.0" stroke-width="4.59"/><path d="M935.4 319.2C934.8 320.8 932.4 325.8 931.5 328.5C930.6 331.2 930.0 333.6 930.3 335.5C930.5 337.4 931.4 339.4 933.0 339.6C934.6 339.8 937.9 337.6 940.1 336.5C942.3 335.4 945.0 333.6 946.0 333.0" stroke-width="4.86"/><path d="M929.9 314.5C931.3 313.3 935.7 307.3 938.2 307.3C940.7 307.3 943.6 313.3 944.7 314.5" stroke-width="2.70"/><path d="M961.0 320.6C960.2 320.1 958.3 317.8 956.5 317.8C954.7 317.8 952.4 318.8 950.4 320.5C948.4 322.2 945.8 325.4 944.8 328.0C943.8 330.6 943.6 334.0 944.2 336.0C944.8 338.0 946.7 339.6 948.5 340.2C950.3 340.8 952.6 340.2 955.0 339.4C957.4 338.6 960.3 336.8 962.8 335.5C965.3 334.2 968.8 332.2 970.0 331.5" stroke-width="4.59"/><path d="M968.0 330.0C969.7 327.3 974.8 318.7 978.0 314.0C981.2 309.3 984.5 304.8 987.0 302.0C989.5 299.2 991.4 297.4 992.8 297.0C994.2 296.6 995.6 297.8 995.6 299.5C995.6 301.2 995.3 303.6 993.0 307.0C990.7 310.4 985.4 315.7 982.0 320.0C978.6 324.3 975.1 329.5 972.5 333.0C969.9 336.5 967.3 339.5 966.3 340.8" stroke-width="4.86"/><path d="M970.4 331.7C971.7 330.1 975.6 324.3 978.0 322.4C980.4 320.5 983.4 319.9 984.8 320.3C986.2 320.7 986.8 322.1 986.4 324.5C986.0 326.9 982.6 332.4 982.3 335.0C982.0 337.6 983.5 339.2 984.8 340.0C986.1 340.8 988.0 340.6 990.0 339.8C992.0 339.1 995.8 336.2 996.9 335.5" stroke-width="4.59"/><path d="M996.9 335.5C998.8 334.5 1005.4 331.6 1008.5 329.5C1011.6 327.4 1015.0 324.7 1015.5 322.8C1016.0 320.9 1013.7 318.4 1011.5 318.3C1009.3 318.2 1004.9 320.3 1002.5 322.5C1000.1 324.7 997.7 328.6 997.2 331.5C996.7 334.4 997.8 338.1 999.5 339.6C1001.2 341.1 1005.1 341.0 1007.5 340.6C1009.9 340.2 1011.8 339.0 1014.0 337.0C1016.2 335.0 1019.5 329.9 1020.6 328.5" stroke-width="4.46"/><ellipse cx="890.2" cy="270.6" rx="10" ry="5" transform="rotate(-60 890.2 270.6)" stroke-width="3.6"/></g>
<text x="783" y="388.5" font-family="Liberation Sans" font-size="7.2" textLength="271" lengthAdjust="spacingAndGlyphs" fill="#555">Le ketchup classic contient 4g de sucre, le ketchup allégé contient 2g de sucre</text>
<!-- nutrition table -->
<rect x="782.5" y="399.5" width="286" height="106" fill="none" stroke="#9a9a9a" stroke-width="1"/>
<g font-family="Liberation Sans" fill="#111">
  <text x="788" y="419" font-size="7.6" font-weight="bold">Valeurs</text>
  <text x="788" y="427.5" font-size="7.6" font-weight="bold">nutritionnelles</text>
  <text x="788" y="438" font-size="4.8" fill="#333">Portion : 1 cuillère à</text>
  <text x="788" y="443.6" font-size="4.8" fill="#333">soupe (16g)</text>
  <text x="788" y="451.8" font-size="4.8" fill="#333">Environ 53 portions</text>
  <text x="788" y="464" font-size="6.2" font-weight="bold">Calories 10</text>
  <text x="788" y="471.5" font-size="6.4" fill="#333">Calories des graisses</text>
  <text x="787.5" y="479.5" font-size="3.3" fill="#444">Les pourcentages de la valeur</text>
  <text x="787.5" y="483.3" font-size="3.3" fill="#444">quotidienne (% VQ) sont basés sur</text>
  <text x="787.5" y="487.1" font-size="3.3" fill="#444">un régime de 2000 calories.</text>
  <text x="865" y="415.5" font-size="4.8" fill="#444">Quantité/par portion</text>
  <text x="956.5" y="415.5" font-size="4.8" fill="#444">% VQ*</text>
  <text x="984" y="415" font-size="4.8" fill="#444">Quantité/par portion</text>
  <text x="1045" y="415" font-size="4.8" fill="#444">% DV*</text>
  <text x="865" y="428" font-size="5.4" font-weight="bold">Matières grasses totales</text>
  <text x="957" y="429" font-size="6.4" font-weight="bold">0%</text>
  <text x="865" y="438.5" font-size="7.4" fill="#333">Acides gras saturés 0g</text>
  <text x="957" y="438" font-size="6.4" font-weight="bold">0%</text>
  <text x="865" y="448" font-size="7.4" fill="#333">Acides gras trans 0g</text>
  <text x="957" y="447.5" font-size="6.4" font-weight="bold">0%</text>
  <text x="865" y="460" font-size="7" font-weight="bold">Cholestérol 0mg</text>
  <text x="957" y="459.5" font-size="6.4" font-weight="bold">0%</text>
  <text x="865" y="470.5" font-size="7" font-weight="bold">Sodium 200mg</text>
  <text x="957" y="470" font-size="6.4" font-weight="bold">8%</text>
  <text x="983.5" y="427.5" font-size="5.4" font-weight="bold">Glucides totaux</text>
  <text x="1045" y="428.5" font-size="6.4" font-weight="bold">0%</text>
  <text x="983.5" y="436.5" font-size="5.2" fill="#444">Fibres alimentaires</text>
  <text x="983.5" y="443.5" font-size="5.2" fill="#444">0g</text>
  <text x="1045" y="437" font-size="6.4" font-weight="bold">0%</text>
  <text x="983.5" y="451.5" font-size="5" fill="#444">Sucres 1g</text>
  <text x="983.5" y="463.5" font-size="7" font-weight="bold">Protéines 0g</text>
  <rect x="865" y="479.3" width="194" height="3.8" fill="#000"/>
  <text x="865" y="496.5" font-size="6.8" fill="#333" textLength="175" lengthAdjust="spacingAndGlyphs">Vitamin A 2% •Vitamin C 0% • Calcium 0% • Fer 2%</text>
</g>
<!-- barcode -->
<g><path fill="#111" d="M805 622.92h55v1.08h-55zM805 620.75h55v1.08h-55zM805 617.49h48.5v1.08h-48.5zM805 613.16h48.5v2.17h-48.5zM805 607.74h48.5v4.34h-48.5zM805 605.57h48.5v1.08h-48.5zM805 600.15h48.5v3.25h-48.5zM805 597.98h48.5v1.08h-48.5zM805 594.73h48.5v2.17h-48.5zM805 590.39h48.5v1.08h-48.5zM805 584.97h48.5v1.08h-48.5zM805 582.80h48.5v1.08h-48.5zM805 579.55h48.5v1.08h-48.5zM805 575.21h48.5v1.08h-48.5zM805 573.04h55v1.08h-55zM805 570.87h55v1.08h-55zM805 568.71h48.5v1.08h-48.5zM805 565.45h48.5v1.08h-48.5zM805 558.95h48.5v3.25h-48.5zM805 556.78h48.5v1.08h-48.5zM805 551.36h48.5v3.25h-48.5zM805 548.11h48.5v1.08h-48.5zM805 544.85h48.5v2.17h-48.5zM805 540.52h48.5v2.17h-48.5zM805 537.26h48.5v2.17h-48.5zM805 534.01h48.5v2.17h-48.5zM805 530.76h48.5v1.08h-48.5zM805 527.51h48.5v1.08h-48.5zM805 523.17h55v1.08h-55zM805 521.00h55v1.08h-55z"/></g>
<g font-family="Liberation Sans" font-size="11.5" fill="#111">
  <text transform="translate(862.5 632) rotate(-90)" textLength="7" lengthAdjust="spacingAndGlyphs">1</text>
  <text transform="translate(862.5 617.5) rotate(-90)" textLength="42" lengthAdjust="spacingAndGlyphs">234567</text>
  <text transform="translate(862.5 568) rotate(-90)" textLength="42" lengthAdjust="spacingAndGlyphs">890128</text>
</g>
<g font-family="Liberation Sans" font-weight="bold" fill="#1a1a1a">
  <text x="880" y="525" font-size="6.6" textLength="164" lengthAdjust="spacingAndGlyphs">INGREDIENTS: CONCENTRÉ DE TOMATES MÛRES</text>
  <text x="880" y="533" font-size="6.6" textLength="192" lengthAdjust="spacingAndGlyphs">TOMATOES, VINAIGRE DISTILLÉ, SEL, ARÔMES NATURELS</text>
  <text x="880" y="541" font-size="6.6" textLength="187" lengthAdjust="spacingAndGlyphs">FLAVOTING, Soja, poudre d'oignon, sucralose*, ÉPICES</text>
  <text x="880" y="548.5" font-size="6.6" textLength="157" lengthAdjust="spacingAndGlyphs">*Non présent habituellement dans le ketchup</text>
  <text x="880" y="562" font-size="6.6" textLength="146" lengthAdjust="spacingAndGlyphs" fill="#333">FABRIQUÉ PAR FRESH KETCHUP COMPANY</text>
  <text x="880" y="570.5" font-size="6.6" textLength="76" lengthAdjust="spacingAndGlyphs" fill="#333">PITTSBURGH, PA15222</text>
  <text x="880" y="580" font-size="5.4" textLength="153" lengthAdjust="spacingAndGlyphs" fill="#333">Questions ou commentaires ? Appelez :1-800-255-5750</text>
</g>
<path fill="#111" d="M1001.5 594.5h11.6v1.7h-11.6zM1017.9 594.5h5.0v1.7h-5.0zM1024.5 594.5h11.6v1.7h-11.6zM1001.5 596.1h1.7v1.7h-1.7zM1011.4 596.1h1.7v1.7h-1.7zM1019.6 596.1h1.7v1.7h-1.7zM1024.5 596.1h1.7v1.7h-1.7zM1034.4 596.1h1.7v1.7h-1.7zM1001.5 597.8h1.7v1.7h-1.7zM1004.8 597.8h5.0v1.7h-5.0zM1011.4 597.8h1.7v1.7h-1.7zM1014.6 597.8h3.4v1.7h-3.4zM1019.6 597.8h1.7v1.7h-1.7zM1024.5 597.8h1.7v1.7h-1.7zM1027.8 597.8h5.0v1.7h-5.0zM1034.4 597.8h1.7v1.7h-1.7zM1001.5 599.4h1.7v1.7h-1.7zM1004.8 599.4h5.0v1.7h-5.0zM1011.4 599.4h1.7v1.7h-1.7zM1014.6 599.4h3.4v1.7h-3.4zM1019.6 599.4h1.7v1.7h-1.7zM1024.5 599.4h1.7v1.7h-1.7zM1027.8 599.4h5.0v1.7h-5.0zM1034.4 599.4h1.7v1.7h-1.7zM1001.5 601.1h1.7v1.7h-1.7zM1004.8 601.1h5.0v1.7h-5.0zM1011.4 601.1h1.7v1.7h-1.7zM1016.3 601.1h6.7v1.7h-6.7zM1024.5 601.1h1.7v1.7h-1.7zM1027.8 601.1h5.0v1.7h-5.0zM1034.4 601.1h1.7v1.7h-1.7zM1001.5 602.7h1.7v1.7h-1.7zM1011.4 602.7h1.7v1.7h-1.7zM1016.3 602.7h1.7v1.7h-1.7zM1024.5 602.7h1.7v1.7h-1.7zM1034.4 602.7h1.7v1.7h-1.7zM1001.5 604.4h11.6v1.7h-11.6zM1016.3 604.4h1.7v1.7h-1.7zM1019.6 604.4h3.4v1.7h-3.4zM1024.5 604.4h11.6v1.7h-11.6zM1019.6 606.0h1.7v1.7h-1.7zM1008.1 607.6h1.7v1.7h-1.7zM1014.6 607.6h1.7v1.7h-1.7zM1022.9 607.6h1.7v1.7h-1.7zM1027.8 607.6h1.7v1.7h-1.7zM1001.5 609.3h1.7v1.7h-1.7zM1006.4 609.3h1.7v1.7h-1.7zM1009.7 609.3h1.7v1.7h-1.7zM1013.0 609.3h1.7v1.7h-1.7zM1016.3 609.3h3.4v1.7h-3.4zM1021.2 609.3h1.7v1.7h-1.7zM1026.1 609.3h5.0v1.7h-5.0zM1032.7 609.3h3.4v1.7h-3.4zM1004.8 610.9h1.7v1.7h-1.7zM1008.1 610.9h1.7v1.7h-1.7zM1011.4 610.9h3.4v1.7h-3.4zM1019.6 610.9h1.7v1.7h-1.7zM1022.9 610.9h5.0v1.7h-5.0zM1034.4 610.9h1.7v1.7h-1.7zM1001.5 612.6h8.3v1.7h-8.3zM1011.4 612.6h3.4v1.7h-3.4zM1017.9 612.6h5.0v1.7h-5.0zM1024.5 612.6h1.7v1.7h-1.7zM1029.4 612.6h1.7v1.7h-1.7zM1032.7 612.6h3.4v1.7h-3.4zM1001.5 614.2h3.4v1.7h-3.4zM1006.4 614.2h5.0v1.7h-5.0zM1013.0 614.2h1.7v1.7h-1.7zM1022.9 614.2h8.3v1.7h-8.3zM1032.7 614.2h3.4v1.7h-3.4zM1014.6 615.9h1.7v1.7h-1.7zM1019.6 615.9h3.4v1.7h-3.4zM1026.1 615.9h1.7v1.7h-1.7zM1034.4 615.9h1.7v1.7h-1.7zM1001.5 617.5h11.6v1.7h-11.6zM1021.2 617.5h1.7v1.7h-1.7zM1026.1 617.5h5.0v1.7h-5.0zM1034.4 617.5h1.7v1.7h-1.7zM1001.5 619.1h1.7v1.7h-1.7zM1011.4 619.1h1.7v1.7h-1.7zM1014.6 619.1h1.7v1.7h-1.7zM1024.5 619.1h1.7v1.7h-1.7zM1027.8 619.1h3.4v1.7h-3.4zM1032.7 619.1h1.7v1.7h-1.7zM1001.5 620.8h1.7v1.7h-1.7zM1004.8 620.8h5.0v1.7h-5.0zM1011.4 620.8h1.7v1.7h-1.7zM1014.6 620.8h1.7v1.7h-1.7zM1022.9 620.8h1.7v1.7h-1.7zM1029.4 620.8h1.7v1.7h-1.7zM1034.4 620.8h1.7v1.7h-1.7zM1001.5 622.4h1.7v1.7h-1.7zM1004.8 622.4h5.0v1.7h-5.0zM1011.4 622.4h1.7v1.7h-1.7zM1016.3 622.4h6.7v1.7h-6.7zM1026.1 622.4h5.0v1.7h-5.0zM1034.4 622.4h1.7v1.7h-1.7zM1001.5 624.1h1.7v1.7h-1.7zM1004.8 624.1h5.0v1.7h-5.0zM1011.4 624.1h1.7v1.7h-1.7zM1014.6 624.1h1.7v1.7h-1.7zM1017.9 624.1h1.7v1.7h-1.7zM1021.2 624.1h3.4v1.7h-3.4zM1026.1 624.1h5.0v1.7h-5.0zM1032.7 624.1h3.4v1.7h-3.4zM1001.5 625.7h1.7v1.7h-1.7zM1011.4 625.7h1.7v1.7h-1.7zM1017.9 625.7h3.4v1.7h-3.4zM1022.9 625.7h1.7v1.7h-1.7zM1027.8 625.7h3.4v1.7h-3.4zM1032.7 625.7h3.4v1.7h-3.4zM1001.5 627.4h11.6v1.7h-11.6zM1019.6 627.4h1.7v1.7h-1.7zM1027.8 627.4h6.7v1.7h-6.7z"/>
<text x="984" y="643" font-family="Liberation Sans" font-size="8.5" textLength="66" lengthAdjust="spacingAndGlyphs" fill="#555">04050031403400</text>
</svg>

<div id="lpanel">
  <div class="abs" style="left:19px;top:20px;width:237px;height:33px;border:1px solid #e3e3e3;border-radius:7px">
    <div class="abs" style="left:9px;top:9px;font-size:11px;color:#7b7b7b;white-space:nowrap">Règles de recherche</div>
    <svg class="abs" style="left:213px;top:9px" width="14" height="14" viewBox="0 0 14 14"><circle cx="5.8" cy="5.8" r="3.5" fill="none" stroke="#3a3a3a" stroke-width="1.3"/><path d="M8.4 8.4 L11.5 11.5" stroke="#3a3a3a" stroke-width="1.6" stroke-linecap="round"/></svg>
  </div>
  <div class="abs" style="left:19px;top:70px;font-size:11px;color:#3f6fce;white-space:nowrap;-webkit-text-stroke:0.2px #3f6fce">Règles de base</div>
  <div class="abs" style="left:19px;top:88px;width:78px;height:2px;background:#3c6fd0"></div>
  <div class="abs" style="left:112px;top:70px;font-size:11px;color:#4a4a4a;white-space:nowrap;-webkit-text-stroke:0.15px #4a4a4a">Règles avancées</div>
  <div class="abs" style="left:0;top:89px;width:276px;height:1px;background:#ececec"></div>

  <div class="sect" style="top:110px">Règles De Texte</div>
  <div class="card" style="left:19px;top:130px">
    <svg style="left:27px;top:19px" width="20" height="18" viewBox="0 0 20 18"><path d="M1.8 12.5 L6.8 0.8 L11.8 12.5 M3.6 8.6 H10" fill="none" stroke="#8a8a8a" stroke-width="1.7" stroke-linejoin="round"/><path d="M8 11.5 L10.8 15.8 L17.5 9.2" fill="none" stroke="#8a8a8a" stroke-width="1.8" stroke-linecap="round" stroke-linejoin="round"/></svg>
    <div class="t" style="top:41px">Orthographe</div>
  </div>
  <div class="card" style="left:102px;top:130px">
    <svg style="left:27px;top:17px" width="16" height="19" viewBox="0 0 16 19"><path d="M3 1.3 H13.5 V15.3 H3.5 Q1.3 15.3 1.3 13.3 V3 Q1.3 1.3 3 1.3 Z M1.3 13.3 Q1.3 11.5 3.5 11.5 H13.5 M5 1.3 V11.5 M13.5 15.3 L14.5 17" fill="none" stroke="#8a8a8a" stroke-width="1.7" stroke-linejoin="round"/></svg>
    <div class="t" style="top:41px">Grammaire</div>
  </div>
  <div class="card" style="left:184px;top:130px">
    <svg style="left:27px;top:5px" width="18" height="18" viewBox="0 0 18 18"><path d="M1.5 1.5 H16.5 M1.5 4.7 H16.5 M1.5 7.9 H16.5 M1.5 11.1 H10 M1.5 14.3 H7.5" stroke="#8a8a8a" stroke-width="1.4"/><path d="M10 13.5 L11.8 15.3 L15.5 11.6" fill="none" stroke="#8a8a8a" stroke-width="1.3"/></svg>
    <div class="t" style="top:27px">Correspond<br>ance de<br>texte</div>
  </div>
  <div class="card" style="left:19px;top:211px">
    <div class="abs" style="left:0;top:16px;width:100%;text-align:center;font-size:16.5px;color:#8f8f8f">Aa</div>
    <div class="t" style="top:42px">Polices</div>
  </div>
  <div class="card" style="left:102px;top:211px">
    <svg style="left:27px;top:18px" width="18" height="18" viewBox="0 0 18 18"><rect x="1.3" y="1.3" width="15.4" height="15.4" rx="1.5" fill="none" stroke="#8a8a8a" stroke-width="1.6"/><path d="M1.3 5.5 H16.7 M6.5 5.5 V16.7 M11.5 5.5 V16.7" stroke="#8a8a8a" stroke-width="1.5"/></svg>
    <div class="t" style="top:42px">Tableaux</div>
  </div>

  <div class="sect" style="top:303px">Règles Visuelles</div>
  <div class="card" style="left:19px;top:323px">
    <svg style="left:27px;top:19px" width="18" height="17" viewBox="0 0 18 17"><path d="M9 1.2 C4.5 1.2 1.2 4.4 1.2 8.3 C1.2 12.3 4.5 15.6 8.5 15.6 C9.6 15.6 10.1 14.9 10.1 14.2 C10.1 13.2 9.2 12.9 9.2 11.9 C9.2 11.1 9.9 10.4 10.8 10.4 H12.6 C14.9 10.4 16.8 8.6 16.8 6.4 C16.8 3.4 13.3 1.2 9 1.2 Z" fill="none" stroke="#8a8a8a" stroke-width="1.5"/><circle cx="4.9" cy="8" r="1.1" fill="#8a8a8a"/><circle cx="7" cy="4.6" r="1.1" fill="#8a8a8a"/><circle cx="11" cy="4.6" r="1.1" fill="#8a8a8a"/><circle cx="13.4" cy="7.4" r="1.1" fill="#8a8a8a"/></svg>
    <div class="t" style="top:42px">Couleur</div>
  </div>
  <div class="card" style="left:102px;top:323px">
    <svg style="left:28px;top:18px" width="18" height="18" viewBox="0 0 18 18"><rect x="1.5" y="1.5" width="15" height="15" rx="1" fill="none" stroke="#8a8a8a" stroke-width="1.7"/><path d="M1.5 12.5 L5.5 8 L9 11 L12.5 6.5 L16.5 10" fill="none" stroke="#8a8a8a" stroke-width="1.5" stroke-linejoin="round"/></svg>
    <div class="t" style="top:42px">Image</div>
  </div>

  <div class="sect" style="top:415px">Règles Logiques</div>
  <div class="card" style="left:19px;top:435px">
    <svg style="left:27px;top:17px" width="18" height="19" viewBox="0 0 18 19"><path d="M9 18 V11.5 L14.5 4.5 M14.5 4.5 V1.5 M12 2.3 L14.5 1 L16.8 3" fill="none" stroke="#8a8a8a" stroke-width="1.6" stroke-linecap="round" stroke-linejoin="round"/><path d="M3.5 1.5 V4.5 M1.2 3 L3.5 1 L5.8 3 M4.5 5.8 L7 9" fill="none" stroke="#8a8a8a" stroke-width="1.6" stroke-linecap="round" stroke-linejoin="round" stroke-dasharray="2 1.5"/></svg>
    <div class="t" style="top:42px">Condition si</div>
  </div>
</div>
</body></html>
